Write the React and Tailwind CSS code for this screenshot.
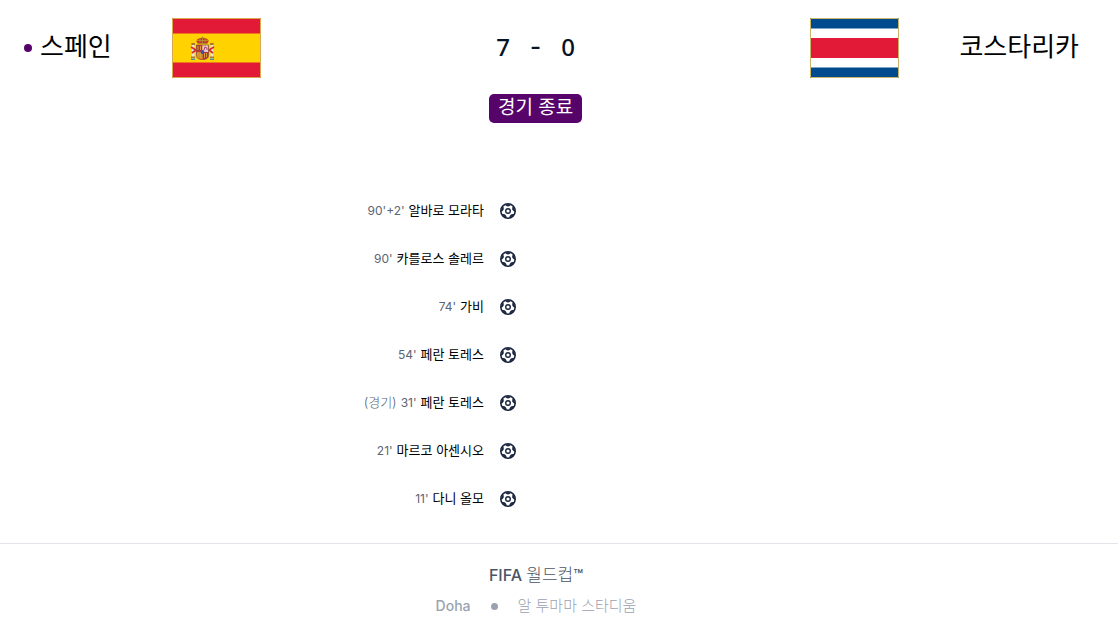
const goals = [
  { time: "90'+2'", player: "알바로 모라타" },
  { time: "90'", player: "카를로스 솔레르" },
  { time: "74'", player: "가비" },
  { time: "54'", player: "페란 토레스" },
  { time: "31'", player: "페란 토레스", note: "(경기)" },
  { time: "21'", player: "마르코 아센시오" },
  { time: "11'", player: "다니 올모" },
];

function BallIcon() {
  return (
    <svg viewBox="0 0 16 16" className="w-4 h-4 shrink-0" aria-hidden="true">
      <circle cx="8" cy="8" r="7.2" fill="#fff" stroke="#1c2740" strokeWidth="1.6" />
      <g fill="#1c2740">
        {[0, 72, 144, 216, 288].map((angle) => (
          <path
            key={angle}
            d="M4.8 1.2h6.4Q10 3.500 8 3.500T4.800 1.200z"
            transform={`rotate(${angle} 8 8)`}
          />
        ))}
      </g>
      <circle cx="8" cy="8" r="2.3" fill="none" stroke="#1c2740" strokeWidth="1.4" />
    </svg>
  );
}

function SpainFlag() {
  return (
    <svg viewBox="0 0 89 60" className="w-[89px] h-[60px] shrink-0" role="img" aria-label="스페인 국기">
      <path fill="#e21a37" d="M0 0h89v60H0z" />
      <path fill="#ffd200" d="M0 15.5h89v29H0z" />
      {/* Pillars */}
      <g>
        <path fill="#e8e3dc" d="M20 27h2.4v15H20zM38.6 27H41v15h-2.4z" />
        <path fill="#a8792c" d="M19.4 25h3.6v2h-3.6zM38 25h3.6v2H38zM19 38.5h4v1.4h-4zM38 38.5h4v1.4h-4z" />
        <path fill="#5d8c87" d="M19 40.5h4V42h-4zM38 40.5h4V42h-4z" />
        <path fill="none" stroke="#d52b31" strokeWidth="1.8" d="M19 29l5 3-4 3M42 29l-5 3 4 3" />
      </g>
      {/* Crown */}
      <path fill="#c43a2a" d="M24.5 23.5c0-5 12-5 12 0L35 26h-9z" />
      <path fill="none" stroke="#b8862b" d="M25 22.5h11.5M26 25.5h9M30.5 18.5v6M28 20v4M33 20v4" />
      {/* Shield */}
      <path fill="#b9343f" d="M24.5 27h6v7h-6z" />
      <path fill="#e8cbd6" d="M30.5 27h6v7h-6z" />
      <path fill="#d78b2c" d="M24.5 34h6v7.5c-4 0-6-1.5-6-4z" />
      <path fill="#b23340" d="M30.5 34h6v3.5c0 2.5-2 4-6 4z" />
      <path stroke="#d9a33c" strokeWidth="0.9" d="M26 28v4M28.5 28v4M26 35v4M28.5 35v5M32.5 35v5M34.5 35v4" />
      <path fill="none" stroke="#b44f7a" strokeWidth="1.1" d="M32 32l1-3 2 1v2" />
      <circle cx="30.5" cy="34" r="1.9" fill="#41509c" />
      <path fill="none" stroke="#8f4a38" strokeWidth="0.8" d="M24.5 27h12v10.5c0 2.5-2 4-6 4s-6-1.5-6-4z" />
      <path fill="none" stroke="#d8a950" d="M.5.5h88v59H.5z" />
    </svg>
  );
}

function CostaRicaFlag() {
  return (
    <svg viewBox="0 0 89 60" className="w-[89px] h-[60px] shrink-0" role="img" aria-label="코스타리카 국기">
      <path fill="#fff" d="M0 0h89v60H0z" />
      <path fill="#004b8d" d="M0 0h89v10.5H0zM0 49.5h89V60H0z" />
      <path fill="#e21a37" d="M0 20h89v20H0z" />
      <path fill="none" stroke="#c9b568" d="M.5.5h88v59H.5z" />
    </svg>
  );
}

export default function App() {
  return (
    <main className="bg-white font-['Inter','Noto_Sans_CJK_KR',sans-serif] text-black">
      <header className="flex items-start pt-[18px] pl-6 pr-[39px]">
        <div className="flex items-center h-[60px] mr-[60px]">
          <span className="w-2 h-2 mr-2 rounded-full bg-[#56046a]" />
          <h2 className="text-[26px] leading-9 pb-0.5 font-normal whitespace-nowrap">스페인</h2>
        </div>
        <SpainFlag />
        <div className="flex-1 flex flex-col items-center">
          <div className="flex items-center gap-5 h-[60px] pb-0.5 font-['Noto_Sans',sans-serif] text-2xl font-medium text-[#061325]">
            <span>7</span>
            <span className="font-['Inter',sans-serif]">-</span>
            <span>0</span>
          </div>
          <p className="mt-4 h-[29px] px-[9px] rounded-[5px] bg-[#56046a] text-white text-[19px] leading-7 whitespace-nowrap">
            경기 종료
          </p>
        </div>
        <CostaRicaFlag />
        <div className="flex items-center h-[60px] ml-[60px]">
          <h2 className="text-[26px] leading-9 pb-0.5 font-normal whitespace-nowrap">코스타리카</h2>
        </div>
      </header>

      <section className="grid grid-cols-2 pt-16 pb-5 pr-[46px]">
        <ul className="pr-5">
          {goals.map((goal) => (
            <li key={goal.time} className="flex items-center justify-end gap-4 h-12">
              <p className="flex items-baseline gap-1 pb-0.5 text-[13px] leading-5">
                {goal.note && <span className="font-light text-[#5b6472]">{goal.note}</span>}
                <span className="text-xs text-[#5b6472]">{goal.time}</span>
                <span>{goal.player}</span>
              </p>
              <BallIcon />
            </li>
          ))}
        </ul>
      </section>

      <footer className="flex flex-col items-center gap-2 pt-5 pr-[46px] border-t border-[#e3e5ea]">
        <p className="text-base leading-[22px] font-medium text-[#4b5565]">
          FIFA <span className="text-[17px] font-light">월드컵</span>™
        </p>
        <div className="flex items-center text-[15px] leading-6 text-[#9aa2b1]">
          <span className="text-sm font-medium">Doha</span>
          <span className="w-[7px] h-[7px] mx-5 rounded-full bg-[#9aa2b1]" />
          <span className="font-light">알 투마마 스타디움</span>
        </div>
      </footer>
    </main>
  );
}
